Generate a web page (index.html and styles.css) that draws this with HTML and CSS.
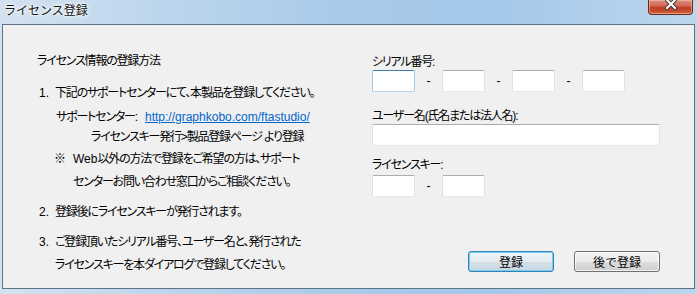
FILE: index.html
```html
<!DOCTYPE html>
<html lang="ja">
<head>
  <meta charset="UTF-8">
  <title>ライセンス登録</title>
  <link rel="stylesheet" href="styles.css">
</head>
<body>

  <div class="window">
    <!-- Title Bar -->
    <div class="titlebar">
      <span class="title">ライセンス登録</span>
      <button class="close" aria-label="閉じる">
        <svg width="12" height="10" viewBox="0 0 12 10">
          <path d="M2 0 L10 8 M10 0 L2 8" stroke="#3a3a3a" stroke-width="4" stroke-linecap="square"/>
          <path d="M2 0 L10 8 M10 0 L2 8" stroke="#ffffff" stroke-width="2" stroke-linecap="square"/>
        </svg>
      </button>
    </div>

    <div class="client">
      <!-- How to register -->
      <div class="guide">
        <p class="heading">ライセンス情報の登録方法</p>

        <div class="step step-first">
          <span class="num">1.</span>
          <div>
            <p>下記のサポートセンターにて、本製品を登録してください。</p>
            <div class="support">
              <p class="support-line"><span class="support-label">サポートセンター:</span><a href="#">http://graphkobo.com/ftastudio/</a></p>
              <p class="support-line path">ライセンスキー発行&gt;製品登録ページ より登録</p>
              <div class="note">
                <span class="mark">※</span>
                <p><span class="latin">Web</span>以外の方法で登録をご希望の方は、サポート<br>センターお問い合わせ窓口からご相談ください。</p>
              </div>
            </div>
          </div>
        </div>

        <div class="step step-second">
          <span class="num">2.</span>
          <p>登録後にライセンスキーが発行されます。</p>
        </div>

        <div class="step step-third">
          <span class="num">3.</span>
          <p>ご登録頂いたシリアル番号、ユーザー名と、発行された<br>ライセンスキーを本ダイアログで登録してください。</p>
        </div>
      </div>

      <!-- Registration Form -->
      <form class="form">
        <label class="label" for="serial1">シリアル番号:</label>
        <div class="code-row">
          <input type="text" id="serial1" class="field code focused">
          <span class="dash">-</span>
          <input type="text" class="field code">
          <span class="dash">-</span>
          <input type="text" class="field code">
          <span class="dash">-</span>
          <input type="text" class="field code">
        </div>

        <label class="label label-user" for="username">ユーザー名(氏名または法人名):</label>
        <input type="text" id="username" class="field wide">

        <label class="label label-key" for="key1">ライセンスキー:</label>
        <div class="code-row">
          <input type="text" id="key1" class="field code">
          <span class="dash">-</span>
          <input type="text" class="field code">
        </div>

        <div class="buttons">
          <button type="button" class="btn btn-default">登録</button>
          <button type="button" class="btn">後で登録</button>
        </div>
      </form>
    </div>
  </div>

</body>
</html>
```

FILE: styles.css
```css
body {
  margin: 0;
  padding: 0;
  overflow: hidden;
  font-family: "Liberation Sans", "Noto Sans CJK JP", sans-serif;
  font-size: 12px;
  color: #000;
}

p {
  margin: 0;
}

/* Window frame */
.window {
  width: 697px;
  height: 294px;
  display: flex;
  flex-direction: column;
  box-sizing: border-box;
  background: linear-gradient(90deg, #d3e2f0 0%, #bed6ed 22%, #a9cbea 48%, #a4c8ea 70%, #bcd6ee 100%);
}

.titlebar {
  height: 24px;
  display: flex;
  align-items: flex-start;
  flex-shrink: 0;
}

.title {
  font-family: "Noto Sans CJK JP", sans-serif;
  font-size: 12px;
  line-height: 20px;
  padding-left: 4px;
  color: #111;
  text-shadow: 0 0 6px #fff, 0 0 3px #fff, 0 0 2px #fff;
}

.close {
  margin-left: auto;
  margin-right: 4px;
  width: 45px;
  height: 15px;
  padding: 0;
  display: flex;
  justify-content: center;
  align-items: flex-start;
  border: 1px solid #6a2a20;
  border-top: none;
  border-radius: 0 0 4px 4px;
  background: linear-gradient(#dd8f80 0%, #d26a55 40%, #c13d24 55%, #c54b2c 80%, #d7744c 100%);
  box-shadow: inset 0 0 0 1px rgba(255, 210, 190, 0.45);
}

/* Client area */
.client {
  flex: 1;
  min-height: 0;
  overflow: hidden;
  margin: 0 2px 5px 2px;
  border: 1px solid #5f7287;
  background-color: #f0f0f0;
  padding: 25px 34px 0 34px;
  display: grid;
  grid-template-columns: 335px 1fr;
  align-items: start;
  white-space: nowrap;
  font-feature-settings: "palt";
  letter-spacing: -1.2px;
}

.guide p {
  line-height: 20px;
}

.heading {
  margin-top: 1px;
  height: 22px;
}

.step {
  display: grid;
  grid-template-columns: 18px 1fr;
}

.num {
  padding-left: 2px;
  line-height: 22px;
  letter-spacing: 0;
}

.step-first {
  margin-top: 9px;
}

.guide .step-first > div > p {
  line-height: 22px;
}

.support {
  margin-top: 3px;
  padding-left: 1px;
}

.support-label {
  display: inline-block;
  width: 89px;
}

.support a,
.latin {
  letter-spacing: 0;
}

.support a {
  color: #0066cc;
}

.path {
  padding-left: 35px;
}

.note {
  display: grid;
  grid-template-columns: 17px 1fr;
  margin-top: 1px;
}

.note .mark {
  margin-left: -2px;
}

.note .mark,
.guide .note p {
  line-height: 23px;
}

.step-second {
  margin-top: 7px;
}

.guide .step-second p {
  line-height: 22px;
}

.step-third {
  margin-top: 8px;
}

.guide .step-third p,
.step-third .num {
  line-height: 23px;
}

/* Form */
.form {
  display: flex;
  flex-direction: column;
  align-items: flex-start;
  padding-top: 4px;
}

.label {
  line-height: 16px;
}

.label-user {
  margin-top: 16px;
}

.label-key {
  margin-top: 11px;
  margin-bottom: 2px;
}

.code-row {
  display: flex;
  align-items: center;
}

.dash {
  width: 27px;
  text-align: center;
  letter-spacing: 0;
}

.field {
  box-sizing: border-box;
  height: 22px;
  margin: 0;
  background: #fff;
  border: 1px solid;
  border-color: #abadb3 #e2e3ea #e3e9ef #dbdfe6;
  border-radius: 2px;
  outline: none;
}

.code {
  width: 43px;
}

.focused {
  border-color: #3d7bad #a4c9e3 #b7d9ed #a4c9e3;
}

.wide {
  width: 288px;
}

.buttons {
  align-self: stretch;
  display: flex;
  justify-content: flex-end;
  gap: 20px;
  margin-top: 54px;
}

.btn {
  width: 86px;
  height: 21px;
  padding: 0;
  font-family: "Noto Sans CJK JP", sans-serif;
  font-size: 12px;
  line-height: 19px;
  letter-spacing: 0;
  color: #000;
  border: 1px solid #707070;
  border-radius: 3px;
  background: linear-gradient(#f2f2f2 0%, #ebebeb 50%, #dddddd 51%, #cfcfcf 100%);
  box-shadow: inset 0 0 0 1px rgba(255, 255, 255, 0.7);
  cursor: pointer;
}

.btn-default {
  border-color: #3c7fb1;
  background: linear-gradient(#eef4f8 0%, #e3ebf1 50%, #d5e1ea 51%, #c9d7e2 100%);
  box-shadow: inset 0 0 0 1px #6fd0f5;
}
```
